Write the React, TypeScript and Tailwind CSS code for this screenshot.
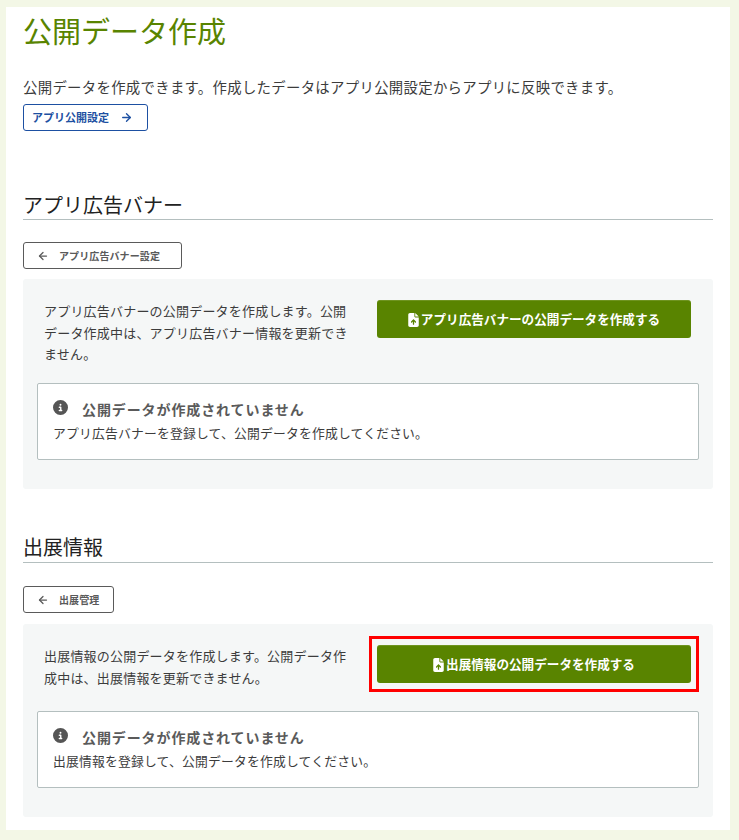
import { ArrowLeft, ArrowRight } from "lucide-react";

const FileIcon = () => (
  <svg viewBox="0 0 384 512" className="h-[14px] w-[11px] shrink-0" fill="currentColor">
    <path d="M64 0C28.7 0 0 28.7 0 64v384c0 35.300 28.700 64 64 64h256c35.300 0 64-28.700 64-64V160H256c-17.700 0-32-14.300-32-32V0H64zm192 0v128h128L256 0zm-40 408c0 13.300-10.700 24-24 24s-24-10.700-24-24v-94l-31 31c-9.400 9.400-24.600 9.400-33.900 0s-9.400-24.600 0-33.900l72-72c9.400-9.400 24.600-9.400 33.900 0l72 72c9.400 9.400 9.400 24.600 0 33.900s-24.600 9.400-33.900 0l-31-31v94z" />
  </svg>
);

const InfoIcon = () => (
  <svg viewBox="0 0 512 512" className="h-[15px] w-[15px]" fill="currentColor">
    <path d="M256 512a256 256 0 1 0 0-512 256 256 0 1 0 0 512zm-40-176h24v-64h-24c-13.300 0-24-10.700-24-24s10.700-24 24-24h48c13.300 0 24 10.700 24 24v88h8c13.300 0 24 10.700 24 24s-10.700 24-24 24h-80c-13.300 0-24-10.700-24-24s10.700-24 24-24zm40-208a32 32 0 1 1 0 64 32 32 0 1 1 0-64z" />
  </svg>
);

interface SectionPanelProps {
  text: string;
  buttonLabel: string;
  alertText: string;
  highlighted?: boolean;
  textHeight: string;
}

const SectionPanel = ({ text, buttonLabel, alertText, highlighted, textHeight }: SectionPanelProps) => (
  <div className="rounded-[3px] bg-[#f5f7f7] px-[14px] pb-[29px] pt-[21px]">
    <div className={`flex items-start justify-between pl-[7px] pr-[8px] ${textHeight}`}>
      <p className="w-[306px] text-[13px] leading-[21.500px] tracking-[0.2px] text-[#3c3c3c]">{text}</p>
      <div className="relative h-[38px] w-[314px]">
        <button className="flex h-[38px] w-[314px] items-center justify-center gap-[2px] rounded-[3px] border-t border-t-[#6f9420] bg-[#598400] text-[12.600px] font-bold text-white">
          <FileIcon />
          {buttonLabel}
        </button>
        {highlighted && (
          <div className="absolute -inset-x-[8px] -bottom-[9px] -top-[9px] border-[3px] border-[#ff0000]" />
        )}
      </div>
    </div>
    <div className="h-[77px] rounded-[2px] border border-[#b4bfbf] bg-white px-[15px] pt-[15px]">
      <div className="flex h-[21px] items-center text-[#5a5a5a]">
        <span className="-mt-[5px] w-[29px] shrink-0 text-[#555555]">
          <InfoIcon />
        </span>
        <span className="text-[14px] font-bold tracking-[0.900px]">公開データが作成されていません</span>
      </div>
      <p className="mt-[3px] text-[12.800px] leading-[20px] tracking-[0.200px] text-[#3c3c3c]">{alertText}</p>
    </div>
  </div>
);

export default function App() {
  return (
    <div className="h-[840px] overflow-hidden bg-[#f3f7e6] pl-[6px] pr-[9px] pt-[7px] font-['Noto_Sans_CJK_JP','Noto_Sans',sans-serif]">
      <div className="h-[823px] bg-white px-[17px]">
        <h1 className="pt-[4px] text-[29px] leading-[38px] text-[#598400]">公開データ作成</h1>
        <p className="mt-[27px] text-[14.400px] leading-[22px] tracking-[0.300px] text-[#3c3c3c]">
          公開データを作成できます。作成したデータはアプリ公開設定からアプリに反映できます。
        </p>
        <button className="mt-[6px] flex h-[27px] w-[125px] items-center gap-[11px] rounded-[3px] border border-[#1d50a2] pl-[8px] text-[11px] font-bold text-[#1d50a2]">
          アプリ公開設定
          <ArrowRight size={13} strokeWidth={2.500} />
        </button>

        <h2 className="mt-[50px] h-[39px] border-b border-[#b4bfbf] text-[20px] leading-[48px] text-[#222222]">
          アプリ広告バナー
        </h2>
        <button className="mt-[22px] flex h-[27px] w-[159px] items-center gap-[10px] rounded-[3px] border border-[#5a5a5a] pl-[13px] text-[10px] font-bold tracking-[0.100px] text-[#5a5a5a]">
          <ArrowLeft size={12} strokeWidth={2.500} />
          アプリ広告バナー設定
        </button>
        <div className="mt-[10px]">
          <SectionPanel
            text="アプリ広告バナーの公開データを作成します。公開データ作成中は、アプリ広告バナー情報を更新できません。"
            buttonLabel="アプリ広告バナーの公開データを作成する"
            alertText="アプリ広告バナーを登録して、公開データを作成してください。"
            textHeight="h-[83px]"
          />
        </div>

        <h2 className="mt-[34px] h-[40px] border-b border-[#b4bfbf] text-[20px] leading-[48px] text-[#222222]">
          出展情報
        </h2>
        <button className="mt-[23px] flex h-[27px] w-[91px] items-center gap-[10px] rounded-[3px] border border-[#5a5a5a] pl-[13px] text-[10px] font-bold tracking-[0.100px] text-[#5a5a5a]">
          <ArrowLeft size={12} strokeWidth={2.500} />
          出展管理
        </button>
        <div className="mt-[11px]">
          <SectionPanel
            text="出展情報の公開データを作成します。公開データ作成中は、出展情報を更新できません。"
            buttonLabel="出展情報の公開データを作成する"
            alertText="出展情報を登録して、公開データを作成してください。"
            textHeight="h-[66px]"
            highlighted
          />
        </div>
      </div>
    </div>
  );
}
